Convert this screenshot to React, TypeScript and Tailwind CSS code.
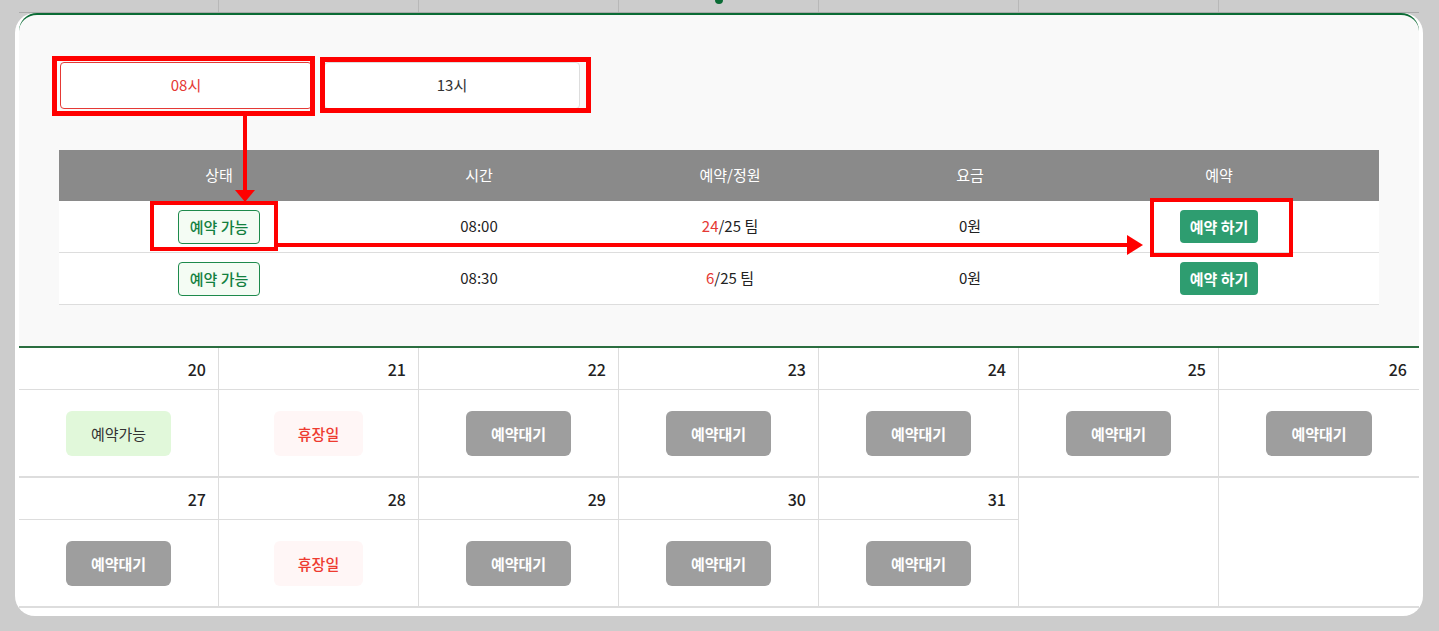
const font = "font-['Noto_Sans_CJK_KR','Noto_Sans',sans-serif]";

type Status = 'open' | 'closed' | 'wait';

interface Day {
  date: number;
  status: Status;
}

const weeks: (Day | null)[][] = [
  [
    { date: 20, status: 'open' },
    { date: 21, status: 'closed' },
    { date: 22, status: 'wait' },
    { date: 23, status: 'wait' },
    { date: 24, status: 'wait' },
    { date: 25, status: 'wait' },
    { date: 26, status: 'wait' },
  ],
  [
    { date: 27, status: 'wait' },
    { date: 28, status: 'closed' },
    { date: 29, status: 'wait' },
    { date: 30, status: 'wait' },
    { date: 31, status: 'wait' },
    null,
    null,
  ],
];

const slots = [
  { time: '08:00', booked: 24, cap: 25, fee: '0원' },
  { time: '08:30', booked: 6, cap: 25, fee: '0원' },
];

function StatusChip({ status }: { status: Status }) {
  if (status === 'open') {
    return <span className="rounded-[6px] bg-[#e1f8da] px-[25px] py-3 text-[15px] leading-[21px] text-[#333]">예약가능</span>;
  }
  if (status === 'closed') {
    return <span className="rounded-[6px] bg-[#fff6f6] px-6 py-3 text-[15px] font-medium leading-[21px] text-[#ee3b30]">휴장일</span>;
  }
  return <span className="rounded-[6px] bg-[#9e9e9e] px-[25px] py-3 text-[15px] font-semibold leading-[21px] text-white">예약대기</span>;
}

function DayCell({ day, last }: { day: Day | null; last: boolean }) {
  return (
    <div className={`flex flex-col ${last ? '' : 'border-r border-[#dddddd]'}`}>
      {day && (
        <>
          <div className="flex h-[42px] items-center justify-end border-b border-[#dddddd] pr-3 text-[16px] font-medium text-[#222]">
            {day.date}
          </div>
          <div className="flex flex-1 items-center justify-center">
            <StatusChip status={day.status} />
          </div>
        </>
      )}
    </div>
  );
}

function SlotTable() {
  const cols = ['w-[320px]', 'w-[200px]', 'w-[302px]', 'w-[178px]', 'w-[320px]'];
  const heads = ['상태', '시간', '예약/정원', '요금', '예약'];
  return (
    <div className="w-[1320px]">
      <div className="flex h-[51px] bg-[#8a8a8a] text-[15px] text-white">
        {heads.map((h, i) => (
          <div key={h} className={`${cols[i]} flex items-center justify-center`}>{h}</div>
        ))}
      </div>
      {slots.map((s) => (
        <div key={s.time} className="flex h-[52px] border-b border-[#dddddd] bg-white text-[15px] text-[#222]">
          <div className={`${cols[0]} flex items-center justify-center`}>
            <span className="rounded-[4px] border border-[#1d8a4c] bg-[#f4fcf4] px-[11px] py-[4px] text-[15px] font-medium leading-[24px] text-[#13803f]">
              예약 가능
            </span>
          </div>
          <div className={`${cols[1]} flex items-center justify-center`}>{s.time}</div>
          <div className={`${cols[2]} flex items-center justify-center`}>
            <span className="text-[#e53935]">{s.booked}</span>/{s.cap} 팀
          </div>
          <div className={`${cols[3]} flex items-center justify-center`}>{s.fee}</div>
          <div className={`${cols[4]} flex items-center justify-center`}>
            <button className="rounded-[4px] bg-[#2e9d70] px-[10px] py-[5px] text-[15px] font-semibold leading-[23px] text-white">
              예약 하기
            </button>
          </div>
        </div>
      ))}
    </div>
  );
}

function Annotations() {
  return (
    <>
      <div className="absolute left-[52px] top-[56px] h-[60px] w-[263px] border-[5px] border-[#ff0000]" />
      <div className="absolute left-[320px] top-[57px] h-[56px] w-[271px] border-[5px] border-[#ff0000]" />
      <div className="absolute left-[243px] top-[116px] h-[76px] w-[4px] bg-[#ff0000]" />
      <div className="absolute left-[235px] top-[190px] h-0 w-0 border-x-[10px] border-t-[12px] border-x-transparent border-t-[#ff0000]" />
      <div className="absolute left-[150px] top-[201px] h-[50px] w-[128px] border-[4px] border-[#ff0000]" />
      <div className="absolute left-[277px] top-[243px] h-[4px] w-[852px] bg-[#ff0000]" />
      <div className="absolute left-[1127px] top-[235px] h-0 w-0 border-y-[10px] border-l-[16px] border-y-transparent border-l-[#ff0000]" />
      <div className="absolute left-[1150px] top-[198px] h-[59px] w-[143px] border-[4px] border-[#ff0000]" />
    </>
  );
}

export default function App() {
  return (
    <div className={`relative h-[631px] w-[1439px] overflow-hidden bg-[#cccccc] ${font}`}>
      {/* calendar row behind, dimmed */}
      <div className="mx-[19px] grid h-[13px] w-[1400px] grid-cols-7 border-b border-[#aaaaaa]">
        {Array.from({ length: 7 }).map((_, i) => (
          <div key={i} className={i < 6 ? 'border-r border-[#b8b8b8]' : ''} />
        ))}
      </div>
      <div className="absolute left-[715px] top-[-4px] h-[8px] w-[8px] rounded-full bg-[#0b6b35]" />

      <div className="ml-[15px] w-[1408px] rounded-[20px] bg-white px-[4px] pb-[8px]">
        {/* time slot panel */}
        <div className="h-[335px] rounded-t-[18px] border-t-2 border-b-2 border-[#0b6b35] border-b-[#2b6e40] bg-[#f9f9f9] px-[40px] pt-[47px]">
          <div className="flex gap-[12px] pl-[1px]">
            <button className="h-[47px] w-[252px] rounded-[4px] border border-[#e53935] bg-white text-[15px] text-[#e53935]">08시</button>
            <button className="h-[47px] w-[256px] rounded-[4px] border border-[#dddddd] bg-white text-[15px] text-[#333]">13시</button>
          </div>
          <div className="mt-[41px]">
            <SlotTable />
          </div>
        </div>

        {/* calendar */}
        {weeks.map((week, wi) => (
          <div key={wi} className="grid h-[130px] grid-cols-7 border-b-2 border-[#dddddd]">
            {week.map((d, di) => (
              <DayCell key={di} day={d} last={di === 6} />
            ))}
          </div>
        ))}
      </div>

      <Annotations />
    </div>
  );
}
